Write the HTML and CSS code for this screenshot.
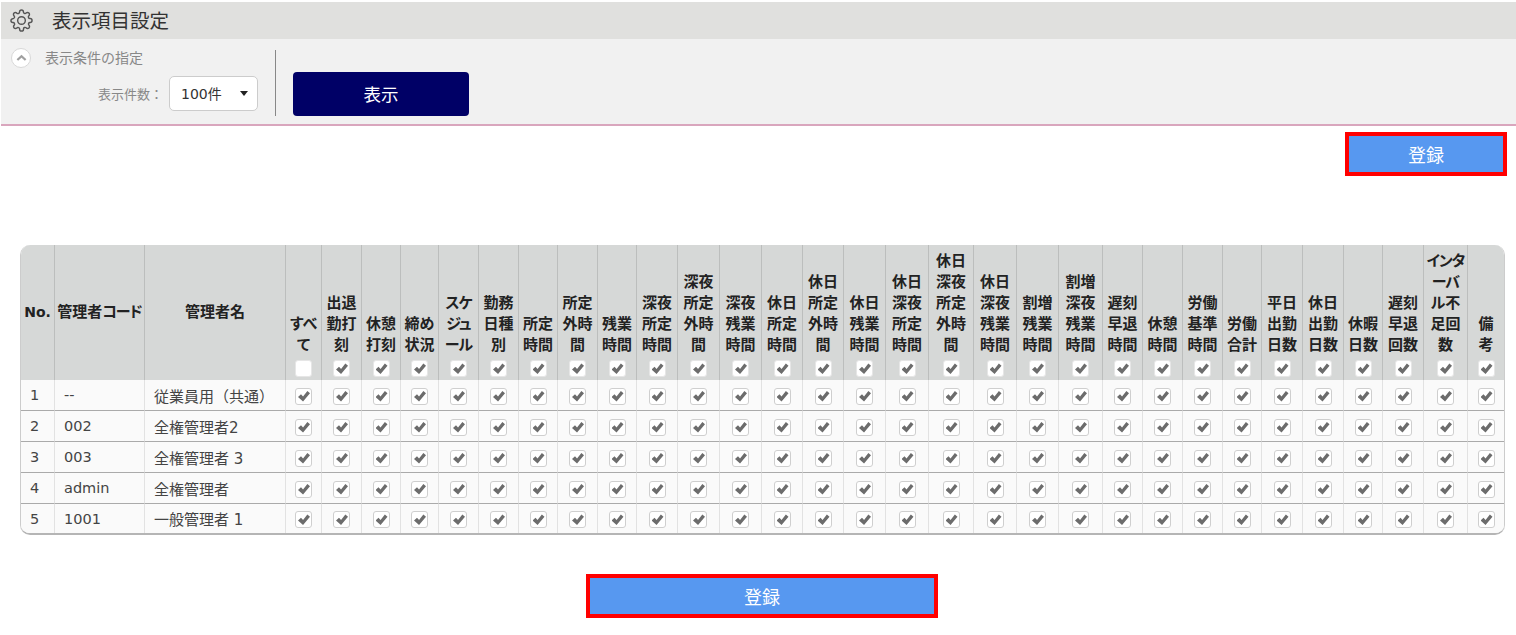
FILE: index.html
```html
<!DOCTYPE html>
<html lang="ja">
<head>
<meta charset="utf-8">
<title>表示項目設定</title>
<link rel="stylesheet" href="styles.css">
</head>
<body>
<header class="titlebar">
  <svg class="gear" viewBox="0 0 24 24" aria-hidden="true"><circle cx="12" cy="12" r="4"/><path d="M19.4 15a1.65 1.65 0 0 0 .33 1.82l.06.06a2 2 0 0 1 0 2.83 2 2 0 0 1-2.83 0l-.06-.06a1.65 1.65 0 0 0-1.82-.33 1.65 1.65 0 0 0-1 1.51V21a2 2 0 0 1-2 2 2 2 0 0 1-2-2v-.09A1.65 1.65 0 0 0 9 19.4a1.65 1.65 0 0 0-1.82.33l-.06.06a2 2 0 0 1-2.83 0 2 2 0 0 1 0-2.83l.06-.06a1.65 1.65 0 0 0 .33-1.82 1.65 1.65 0 0 0-1.51-1H3a2 2 0 0 1-2-2 2 2 0 0 1 2-2h.09A1.65 1.65 0 0 0 4.6 9a1.65 1.65 0 0 0-.33-1.82l-.06-.06a2 2 0 0 1 0-2.83 2 2 0 0 1 2.83 0l.06.06a1.65 1.65 0 0 0 1.82.33H9a1.65 1.65 0 0 0 1-1.51V3a2 2 0 0 1 2-2 2 2 0 0 1 2 2v.09a1.65 1.65 0 0 0 1 1.51 1.65 1.65 0 0 0 1.82-.33l.06-.06a2 2 0 0 1 2.83 0 2 2 0 0 1 0 2.83l-.06.06a1.65 1.65 0 0 0-.33 1.82V9a1.65 1.65 0 0 0 1.51 1H21a2 2 0 0 1 2 2 2 2 0 0 1-2 2h-.09a1.65 1.65 0 0 0-1.51 1z"/></svg>
  <h1 class="title">表示項目設定</h1>
</header>

<section class="filter">
  <div class="filter-left">
    <div class="filter-head">
      <span class="toggle"><svg viewBox="0 0 12 8" aria-hidden="true"><path d="M1.5 6.2 6 2l4.5 4.2"/></svg></span>
      <span class="filter-title">表示条件の指定</span>
    </div>
    <div class="filter-row">
      <label class="filter-label" for="cnt">表示件数：</label>
      <span class="select-wrap">
        <select id="cnt" class="select"><option>100件</option></select>
      </span>
    </div>
  </div>
  <div class="filter-action">
    <button class="show-btn" type="button">表示</button>
  </div>
</section>

<div class="top-actions">
  <button class="reg-btn reg-top" type="button">登録</button>
</div>

<div class="table-wrap">
<table class="grid">
  <colgroup>
    <col class="w34"><col class="w90"><col class="w141"><col class="w36"><col class="w40"><col class="w39"><col class="w38"><col class="w40"><col class="w40"><col class="w39"><col class="w40"><col class="w39"><col class="w41"><col class="w42"><col class="w42"><col class="w41"><col class="w41"><col class="w42"><col class="w43"><col class="w45"><col class="w43"><col class="w42"><col class="w44"><col class="w40"><col class="w40"><col class="w40"><col class="w39"><col class="w41"><col class="w41"><col class="w39"><col class="w41"><col class="w44"><col class="w36">
  </colgroup>
  <thead>
    <tr>
      <th class="mid no">No.</th>
      <th class="mid">管理者<span class="kana">コード</span></th>
      <th class="mid">管理者名</th>
      <th>すべ<br>て<input type="checkbox"></th>
      <th>出退<br>勤打<br>刻<input type="checkbox" checked></th>
      <th>休憩<br>打刻<input type="checkbox" checked></th>
      <th>締め<br>状況<input type="checkbox" checked></th>
      <th><span class="kana">スケ<br>ジュ<br>ール</span><input type="checkbox" checked></th>
      <th>勤務<br>日種<br>別<input type="checkbox" checked></th>
      <th>所定<br>時間<input type="checkbox" checked></th>
      <th>所定<br>外時<br>間<input type="checkbox" checked></th>
      <th>残業<br>時間<input type="checkbox" checked></th>
      <th>深夜<br>所定<br>時間<input type="checkbox" checked></th>
      <th>深夜<br>所定<br>外時<br>間<input type="checkbox" checked></th>
      <th>深夜<br>残業<br>時間<input type="checkbox" checked></th>
      <th>休日<br>所定<br>時間<input type="checkbox" checked></th>
      <th>休日<br>所定<br>外時<br>間<input type="checkbox" checked></th>
      <th>休日<br>残業<br>時間<input type="checkbox" checked></th>
      <th>休日<br>深夜<br>所定<br>時間<input type="checkbox" checked></th>
      <th>休日<br>深夜<br>所定<br>外時<br>間<input type="checkbox" checked></th>
      <th>休日<br>深夜<br>残業<br>時間<input type="checkbox" checked></th>
      <th>割増<br>残業<br>時間<input type="checkbox" checked></th>
      <th>割増<br>深夜<br>残業<br>時間<input type="checkbox" checked></th>
      <th>遅刻<br>早退<br>時間<input type="checkbox" checked></th>
      <th>休憩<br>時間<input type="checkbox" checked></th>
      <th>労働<br>基準<br>時間<input type="checkbox" checked></th>
      <th>労働<br>合計<input type="checkbox" checked></th>
      <th>平日<br>出勤<br>日数<input type="checkbox" checked></th>
      <th>休日<br>出勤<br>日数<input type="checkbox" checked></th>
      <th>休暇<br>日数<input type="checkbox" checked></th>
      <th>遅刻<br>早退<br>回数<input type="checkbox" checked></th>
      <th><span class="kana">インタ<br>ーバ</span><br>ル不<br>足回<br>数<input type="checkbox" checked></th>
      <th>備<br>考<input type="checkbox" checked></th>
    </tr>
  </thead>
  <tbody>
    <tr>
      <td class="txt">1</td><td class="txt">--</td><td class="txt name">従業員用（共通）</td>
      <td><input type="checkbox" checked></td><td><input type="checkbox" checked></td><td><input type="checkbox" checked></td><td><input type="checkbox" checked></td><td><input type="checkbox" checked></td><td><input type="checkbox" checked></td><td><input type="checkbox" checked></td><td><input type="checkbox" checked></td><td><input type="checkbox" checked></td><td><input type="checkbox" checked></td><td><input type="checkbox" checked></td><td><input type="checkbox" checked></td><td><input type="checkbox" checked></td><td><input type="checkbox" checked></td><td><input type="checkbox" checked></td><td><input type="checkbox" checked></td><td><input type="checkbox" checked></td><td><input type="checkbox" checked></td><td><input type="checkbox" checked></td><td><input type="checkbox" checked></td><td><input type="checkbox" checked></td><td><input type="checkbox" checked></td><td><input type="checkbox" checked></td><td><input type="checkbox" checked></td><td><input type="checkbox" checked></td><td><input type="checkbox" checked></td><td><input type="checkbox" checked></td><td><input type="checkbox" checked></td><td><input type="checkbox" checked></td><td><input type="checkbox" checked></td>
    </tr>
    <tr>
      <td class="txt">2</td><td class="txt">002</td><td class="txt name">全権管理者2</td>
      <td><input type="checkbox" checked></td><td><input type="checkbox" checked></td><td><input type="checkbox" checked></td><td><input type="checkbox" checked></td><td><input type="checkbox" checked></td><td><input type="checkbox" checked></td><td><input type="checkbox" checked></td><td><input type="checkbox" checked></td><td><input type="checkbox" checked></td><td><input type="checkbox" checked></td><td><input type="checkbox" checked></td><td><input type="checkbox" checked></td><td><input type="checkbox" checked></td><td><input type="checkbox" checked></td><td><input type="checkbox" checked></td><td><input type="checkbox" checked></td><td><input type="checkbox" checked></td><td><input type="checkbox" checked></td><td><input type="checkbox" checked></td><td><input type="checkbox" checked></td><td><input type="checkbox" checked></td><td><input type="checkbox" checked></td><td><input type="checkbox" checked></td><td><input type="checkbox" checked></td><td><input type="checkbox" checked></td><td><input type="checkbox" checked></td><td><input type="checkbox" checked></td><td><input type="checkbox" checked></td><td><input type="checkbox" checked></td><td><input type="checkbox" checked></td>
    </tr>
    <tr>
      <td class="txt">3</td><td class="txt">003</td><td class="txt name">全権管理者 3</td>
      <td><input type="checkbox" checked></td><td><input type="checkbox" checked></td><td><input type="checkbox" checked></td><td><input type="checkbox" checked></td><td><input type="checkbox" checked></td><td><input type="checkbox" checked></td><td><input type="checkbox" checked></td><td><input type="checkbox" checked></td><td><input type="checkbox" checked></td><td><input type="checkbox" checked></td><td><input type="checkbox" checked></td><td><input type="checkbox" checked></td><td><input type="checkbox" checked></td><td><input type="checkbox" checked></td><td><input type="checkbox" checked></td><td><input type="checkbox" checked></td><td><input type="checkbox" checked></td><td><input type="checkbox" checked></td><td><input type="checkbox" checked></td><td><input type="checkbox" checked></td><td><input type="checkbox" checked></td><td><input type="checkbox" checked></td><td><input type="checkbox" checked></td><td><input type="checkbox" checked></td><td><input type="checkbox" checked></td><td><input type="checkbox" checked></td><td><input type="checkbox" checked></td><td><input type="checkbox" checked></td><td><input type="checkbox" checked></td><td><input type="checkbox" checked></td>
    </tr>
    <tr>
      <td class="txt">4</td><td class="txt">admin</td><td class="txt name">全権管理者</td>
      <td><input type="checkbox" checked></td><td><input type="checkbox" checked></td><td><input type="checkbox" checked></td><td><input type="checkbox" checked></td><td><input type="checkbox" checked></td><td><input type="checkbox" checked></td><td><input type="checkbox" checked></td><td><input type="checkbox" checked></td><td><input type="checkbox" checked></td><td><input type="checkbox" checked></td><td><input type="checkbox" checked></td><td><input type="checkbox" checked></td><td><input type="checkbox" checked></td><td><input type="checkbox" checked></td><td><input type="checkbox" checked></td><td><input type="checkbox" checked></td><td><input type="checkbox" checked></td><td><input type="checkbox" checked></td><td><input type="checkbox" checked></td><td><input type="checkbox" checked></td><td><input type="checkbox" checked></td><td><input type="checkbox" checked></td><td><input type="checkbox" checked></td><td><input type="checkbox" checked></td><td><input type="checkbox" checked></td><td><input type="checkbox" checked></td><td><input type="checkbox" checked></td><td><input type="checkbox" checked></td><td><input type="checkbox" checked></td><td><input type="checkbox" checked></td>
    </tr>
    <tr>
      <td class="txt">5</td><td class="txt">1001</td><td class="txt name">一般管理者 1</td>
      <td><input type="checkbox" checked></td><td><input type="checkbox" checked></td><td><input type="checkbox" checked></td><td><input type="checkbox" checked></td><td><input type="checkbox" checked></td><td><input type="checkbox" checked></td><td><input type="checkbox" checked></td><td><input type="checkbox" checked></td><td><input type="checkbox" checked></td><td><input type="checkbox" checked></td><td><input type="checkbox" checked></td><td><input type="checkbox" checked></td><td><input type="checkbox" checked></td><td><input type="checkbox" checked></td><td><input type="checkbox" checked></td><td><input type="checkbox" checked></td><td><input type="checkbox" checked></td><td><input type="checkbox" checked></td><td><input type="checkbox" checked></td><td><input type="checkbox" checked></td><td><input type="checkbox" checked></td><td><input type="checkbox" checked></td><td><input type="checkbox" checked></td><td><input type="checkbox" checked></td><td><input type="checkbox" checked></td><td><input type="checkbox" checked></td><td><input type="checkbox" checked></td><td><input type="checkbox" checked></td><td><input type="checkbox" checked></td><td><input type="checkbox" checked></td>
    </tr>
  </tbody>
</table>
</div>

<div class="bottom-actions">
  <button class="reg-btn reg-bottom" type="button">登録</button>
</div>
</body>
</html>
```

FILE: styles.css
```css
* { box-sizing: border-box; }

html, body { margin: 0; padding: 0; background: #fff; }

body {
  font-family: "DejaVu Sans", "Noto Sans CJK JP", sans-serif;
  color: #333;
  padding-top: 2px;
  overflow: hidden;
}

/* title bar */
.titlebar {
  display: flex;
  align-items: center;
  height: 37px;
  margin-left: 1px;
  padding-left: 9px;
  background: #e0e0de;
}
.gear {
  width: 23px;
  height: 23px;
  margin-top: -1px;
  fill: none;
  stroke: #555;
  stroke-width: 1.5;
}
.title {
  margin: -2px 0 0 19px;
  font-size: 19.5px;
  font-weight: 400;
  color: #333;
}

/* filter panel */
.filter {
  display: flex;
  height: 87px;
  margin-left: 1px;
  background: #f1f1f1;
  border-bottom: 2px solid #d9a6bd;
}
.filter-left {
  width: 275px;
  height: 66px;
  margin-top: 11px;
  border-right: 1px solid #888;
  padding-left: 10px;
}
.filter-head {
  display: flex;
  align-items: center;
  height: 16px;
}
.toggle {
  display: flex;
  align-items: center;
  justify-content: center;
  width: 20px;
  height: 20px;
  border-radius: 50%;
  background: #fff;
  border: 1px solid #d8d8d8;
}
.toggle svg {
  width: 11px;
  height: 8px;
  fill: none;
  stroke: #a0a0a0;
  stroke-width: 2.4;
}
.filter-title {
  margin: -3px 0 0 14px;
  font-size: 14px;
  color: #888;
}
.filter-row {
  display: flex;
  align-items: center;
  justify-content: flex-end;
  margin-top: 10px;
  padding-right: 17px;
}
.filter-label {
  margin-right: 6px;
  font-size: 13px;
  color: #888;
}
.select-wrap {
  position: relative;
  display: block;
  width: 89px;
  height: 35px;
}
.select-wrap::after {
  content: "";
  position: absolute;
  top: 15px;
  right: 10px;
  border-left: 4.5px solid transparent;
  border-right: 4.5px solid transparent;
  border-top: 5px solid #222;
}
.select {
  appearance: none;
  width: 100%;
  height: 100%;
  padding: 0 0 0 11px;
  font: inherit;
  font-size: 14px;
  color: #333;
  background: #fff;
  border: 1px solid #ccc;
  border-radius: 5px;
}
.filter-action {
  padding: 33px 0 0 17px;
}
.show-btn {
  display: block;
  width: 176px;
  height: 44px;
  padding: 0 0 2px;
  border: 0;
  border-radius: 4px;
  background: #000066;
  color: #fff;
  font: inherit;
  font-size: 17.5px;
}

/* register buttons */
.reg-btn {
  display: block;
  height: 44px;
  padding: 0;
  border: 4px solid #f00;
  background: #5798f0;
  color: #fff;
  font: inherit;
  font-size: 18px;
}
.reg-top { width: 162px; }
.reg-bottom { width: 352px; }
.top-actions {
  display: flex;
  justify-content: flex-end;
  margin-top: 6px;
  padding-right: 9px;
}
.bottom-actions {
  display: flex;
  justify-content: center;
  margin-top: 39px;
  padding-left: 8px;
}

/* table */
.table-wrap {
  width: 1485px;
  margin: 69px 0 0 20px;
  border-left: 1px solid #ccc;
  border-right: 1px solid #ccc;
  border-bottom: 2px solid #b5b5b5;
  border-radius: 10px;
  overflow: hidden;
}
.grid {
  width: 1483px;
  table-layout: fixed;
  border-collapse: separate;
  border-spacing: 0;
}
.w34 { width: 34px; }
.w36 { width: 36px; }
.w38 { width: 38px; }
.w39 { width: 39px; }
.w40 { width: 40px; }
.w41 { width: 41px; }
.w42 { width: 42px; }
.w43 { width: 43px; }
.w44 { width: 44px; }
.w45 { width: 45px; }
.w90 { width: 90px; }
.w141 { width: 141px; }

.grid th {
  height: 135px;
  padding: 0 0 3px;
  background: #d6d8d7;
  border-right: 1px solid #bcbebd;
  color: #222;
  font-size: 15px;
  font-feature-settings: "palt";
  font-weight: 700;
  line-height: 21px;
  text-align: center;
  vertical-align: bottom;
  white-space: nowrap;
}
.grid th.mid { vertical-align: middle; padding: 0; }
.grid th.no { font-size: 14px; }
.grid th:last-child, .grid td:last-child { border-right: 0; }
.kana { letter-spacing: -1px; }

.grid td {
  height: 31px;
  padding: 0;
  background: #fafafa;
  border-right: 1px solid #e2e2e2;
  border-bottom: 1px solid #aaa;
  vertical-align: middle;
}
.grid tbody tr:last-child td { height: 29px; border-bottom: 0; }
.grid td.txt {
  padding-left: 9px;
  font-size: 14.5px;
  color: #444;
  white-space: nowrap;
}
.grid td.name { font-size: 15px; }

/* checkboxes */
.grid input {
  appearance: none;
  position: relative;
  display: block;
  width: 17px;
  height: 17px;
  margin: 0 auto;
  background: #fff;
  border: 1px solid #cfcfcf;
  border-radius: 3px;
}
.grid td input { margin-top: 2px; }
.grid th input {
  margin-top: 4px;
  border-color: #e6e6e6;
}
.grid input:checked::after {
  content: "";
  position: absolute;
  left: 2px;
  top: 2px;
  width: 12px;
  height: 11px;
  background: #6c6c6c;
  clip-path: polygon(0 58%, 25% 35%, 42% 55%, 78% 5%, 100% 25%, 42% 100%);
}
```
